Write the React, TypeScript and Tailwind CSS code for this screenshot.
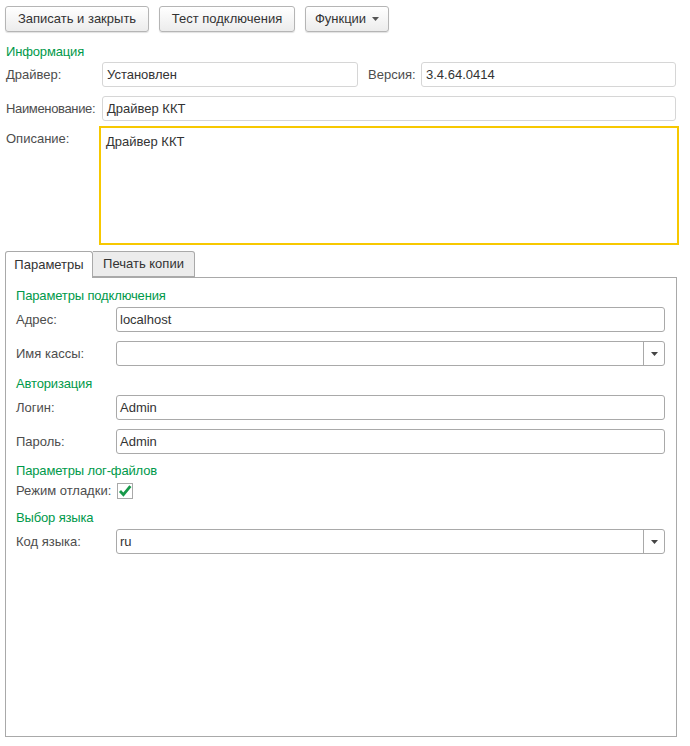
import React from "react";

const Btn = ({ children, w }: { children: React.ReactNode; w: string }) => (
  <button
    className={`${w} h-[26px] rounded-[3px] border border-[#b5b5b5] bg-gradient-to-b from-[#ffffff] to-[#ececec] text-[#333] text-[13px] flex items-center justify-center shadow-[0_1px_1px_rgba(0,0,0,0.12)]`}
  >
    {children}
  </button>
);

const Caret = () => (
  <svg width="7" height="4" viewBox="0 0 7 4" className="ml-[6px]">
    <path d="M0 0 H7 L3.5 4 Z" fill="#555" />
  </svg>
);

const TopInput = ({ value, w }: { value: string; w: string }) => (
  <div className={`${w} h-[25px] rounded-[3px] border border-[#d6d6d6] bg-white flex items-center pl-[4px] text-[#333]`}>
    {value}
  </div>
);

const TabInput = ({ value, drop }: { value: string; drop?: boolean }) => (
  <div className="w-[549px] h-[25px] rounded-[3px] border border-[#a9a9a9] bg-white flex items-center text-[#333]">
    <div className="flex-1 pl-[3px]">{value}</div>
    {drop && (
      <div className="w-[21px] h-full border-l border-[#a9a9a9] flex items-center justify-center">
        <svg width="7" height="4" viewBox="0 0 7 4">
          <path d="M0 0 H7 L3.5 4 Z" fill="#444" />
        </svg>
      </div>
    )}
  </div>
);

const Heading = ({ children, cls }: { children: React.ReactNode; cls: string }) => (
  <div className={`${cls} h-[16px] leading-[16px] text-[#00994a] tracking-[-0.15px]`}>{children}</div>
);

const TabRow = ({ label, children, cls }: { label: string; children: React.ReactNode; cls: string }) => (
  <div className={`${cls} flex items-center`}>
    <div className="w-[100px] text-[#4d4d4d]">{label}</div>
    {children}
  </div>
);

export default function App() {
  return (
    <div
      className="w-[690px] h-[746px] bg-white text-[13px] leading-[16px] overflow-hidden"
      style={{ fontFamily: '"Liberation Sans", Arial, sans-serif' }}
    >
      <div className="pt-[6px] pl-[5px] flex gap-[10px]">
        <Btn w="w-[144px]">Записать и закрыть</Btn>
        <Btn w="w-[136px]">Тест подключения</Btn>
        <Btn w="w-[84px]">
          Функции
          <Caret />
        </Btn>
      </div>

      <div className="pl-[6px]">
        <Heading cls="mt-[12px]">Информация</Heading>
        <div className="mt-[2px] flex items-center">
          <div className="w-[96px] text-[#4d4d4d]">Драйвер:</div>
          <TopInput w="w-[256px]" value="Установлен" />
          <div className="w-[63px] pl-[10px] text-[#4d4d4d]">Версия:</div>
          <TopInput w="w-[255px]" value="3.4.64.0414" />
        </div>
        <div className="mt-[9px] flex items-center">
          <div className="w-[96px] text-[#4d4d4d] tracking-[-0.35px]">Наименование:</div>
          <TopInput w="w-[574px]" value="Драйвер ККТ" />
        </div>
        <div className="mt-[5px] flex">
          <div className="w-[93px] pt-[5px] text-[#4d4d4d]">Описание:</div>
          <div className="w-[580px] h-[119px] border-2 border-[#f7c800] pt-[6px] pl-[5px] text-[#333]">Драйвер ККТ</div>
        </div>
      </div>

      <div className="pl-[5px] mt-[6px]">
        <div className="flex h-[27px] relative z-10">
          <div className="w-[88px] h-[27px] border border-b-0 border-[#a9a9a9] rounded-t-[3px] bg-white flex items-center justify-center text-[#333]">
            Параметры
          </div>
          <div className="w-[102px] h-[26px] border border-l-0 border-[#a9a9a9] rounded-tr-[3px] bg-[#ececec] flex items-center justify-center text-[#333]">
            Печать копии
          </div>
        </div>
        <div className="w-[672px] h-[460px] -mt-[1px] border border-[#a9a9a9] pl-[10px] pr-[11px]">
          <Heading cls="mt-[10px]">Параметры подключения</Heading>
          <TabRow label="Адрес:" cls="mt-[3px]">
            <TabInput value="localhost" />
          </TabRow>
          <TabRow label="Имя кассы:" cls="mt-[9px]">
            <TabInput value="" drop />
          </TabRow>
          <Heading cls="mt-[10px]">Авторизация</Heading>
          <TabRow label="Логин:" cls="mt-[3px]">
            <TabInput value="Admin" />
          </TabRow>
          <TabRow label="Пароль:" cls="mt-[9px]">
            <TabInput value="Admin" />
          </TabRow>
          <Heading cls="mt-[9px]">Параметры лог-файлов</Heading>
          <div className="mt-[2px] h-[20px] flex items-center">
            <div className="w-[101px] text-[#4d4d4d]">Режим отладки:</div>
            <div className="w-[16px] h-[16px] border border-[#a9a9a9] bg-white flex items-center justify-center">
              <svg width="14" height="14" viewBox="0 0 14 14">
                <path d="M2 7 L5.4 10.6 L12.4 2.2" fill="none" stroke="#16994a" strokeWidth="2.8" />
              </svg>
            </div>
          </div>
          <Heading cls="mt-[9px]">Выбор языка</Heading>
          <TabRow label="Код языка:" cls="mt-[3px]">
            <TabInput value="ru" drop />
          </TabRow>
        </div>
      </div>
    </div>
  );
}
